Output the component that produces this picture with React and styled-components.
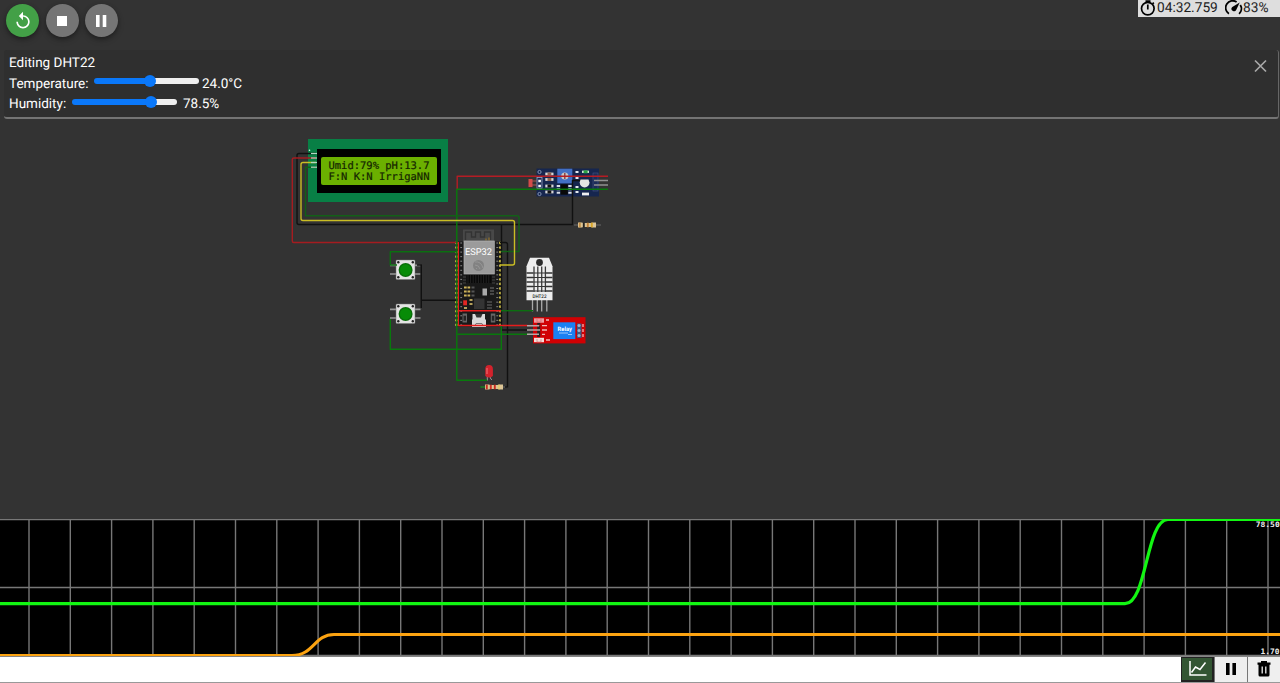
import React from "react";
import styled, { createGlobalStyle } from "styled-components";

const GlobalStyle = createGlobalStyle`
  *, *::before, *::after { box-sizing: border-box; }
  body { margin: 0; background: #333; overflow: hidden; }
  button { font: inherit; padding: 0; cursor: pointer; }
`;

const Page = styled.main`
  position: relative;
  display: flex;
  flex-direction: column;
  width: 100%;
  height: 683px;
  background: #333;
  color: #fff;
  font-family: Roboto, "Liberation Sans", sans-serif;
  text-rendering: geometricPrecision;
  overflow: hidden;
`;

const Toolbar = styled.header`
  display: flex;
  gap: 6.5px;
  height: 50px;
  padding: 4px 0 0 6px;
  flex: none;
`;

const RoundButton = styled.button`
  display: flex;
  align-items: center;
  justify-content: center;
  width: 33px;
  height: 33px;
  border: 0;
  border-radius: 50%;
  color: #fff;
  background: ${(p) => (p.$primary ? "#43a047" : "#757575")};
  box-shadow: 0 2px 4px rgba(0, 0, 0, 0.3), 0 3px 7px rgba(0, 0, 0, 0.15);
`;

const StatusBadge = styled.div`
  position: absolute;
  top: 0;
  right: 0;
  display: flex;
  align-items: center;
  width: 142px;
  height: 17px;
  padding-left: 2px;
  background: #dedede;
  color: #1c1c1c;
  font-size: 13.7px;
  svg { flex: none; }
`;

const StatusText = styled.span`
  width: ${(p) => p.$width}px;
  height: 17px;
  line-height: 16px;
  white-space: nowrap;
`;

const EditPanel = styled.section`
  display: flex;
  justify-content: space-between;
  flex: none;
  height: 69px;
  margin: 0 1px 0 4px;
  padding: 3px 10px 0 5px;
  background: #2f2f2f;
  border-right: 1.5px solid #666;
  border-bottom: 2px solid #747474;
  border-radius: 3px;
  font-size: 13.5px;
`;

const PanelLines = styled.div`
  display: flex;
  flex-direction: column;
`;

const PanelLine = styled.label`
  display: flex;
  align-items: center;
  height: 20.6px;
  white-space: nowrap;
`;

const LabelText = styled.span`
  width: ${(p) => p.$width}px;
`;

const Track = styled.span`
  position: relative;
  width: 105px;
  height: 6px;
  margin: 0 ${(p) => p.$gap}px 5px 0;
  border-radius: 3px;
  background: linear-gradient(to right, #0a78fa ${(p) => p.$fill}px, #efefef ${(p) => p.$fill}px);
  &::after {
    content: "";
    position: absolute;
    top: -3px;
    left: ${(p) => p.$fill - 6}px;
    width: 12px;
    height: 12px;
    border-radius: 50%;
    background: #0a78fa;
  }
`;

const CloseButton = styled.button`
  width: 15px;
  height: 26px;
  border: 0;
  background: none;
  color: #a8a8a8;
  svg { display: block; }
`;

const Board = styled.div`
  position: relative;
  flex: 1;
  min-height: 0;
`;

const PartBox = styled.svg`
  position: absolute;
  left: ${(p) => p.$x}px;
  top: ${(p) => p.$y - 119}px;
`;

const LcdText = styled.text`
  font: 10.4px "DejaVu Sans Mono", "Liberation Mono", monospace;
  fill: #142400;
  stroke: #142400;
  stroke-width: 0.2px;
  white-space: pre;
`;

const ChipText = styled.text`
  font: ${(p) => p.$weight || 500} ${(p) => p.$size}px Roboto, "Liberation Sans", sans-serif;
  fill: ${(p) => p.$fill || "#fff"};
  text-anchor: middle;
`;

const ChartArea = styled.div`
  flex: none;
  height: 137px;
  background: #000;
  svg { display: block; }
`;

const ScaleText = styled.text`
  font: bold 7.4px "DejaVu Sans Mono", "Liberation Mono", monospace;
  fill: #eee;
`;

const SerialBar = styled.footer`
  display: flex;
  flex: none;
  height: 27px;
  background: #fff;
  border-top: 1px solid #858585;
  border-bottom: 1px solid #999;
`;

const SerialInput = styled.input`
  flex: 1;
  min-width: 0;
  border: 0;
  padding: 0 8px;
  outline: 0;
  background: #fff;
`;

const BarButton = styled.button`
  display: flex;
  align-items: center;
  justify-content: center;
  width: 33px;
  padding-bottom: 2px;
  padding-left: ${(p) => (p.$active ? 2 : 0)}px;
  border: 1px solid ${(p) => (p.$active ? "#222" : "#777")};
  border-width: ${(p) => (p.$active ? "1px 2px 2px 1px" : "0 0 0 1.5px")};
  background: ${(p) => (p.$active ? "#335533" : "#efefef")};
  color: ${(p) => (p.$active ? "#fff" : "#000")};
`;

/* Parts are drawn in board coordinates, so the view box starts at the part's own place. */
function Part({ x, y, w, h, children }) {
  return (
    <PartBox $x={x} $y={y} width={w} height={h} viewBox={`${x} ${y} ${w} ${h}`}>
      {children}
    </PartBox>
  );
}

function Lcd() {
  return (
    <Part x={306} y={138} w={144} h={66}>
      <rect x="308" y="139" width="140" height="63" fill="#087f45" />
      <rect x="317" y="149" width="124" height="44" fill="#000" />
      <rect x="321" y="157" width="116" height="28" rx="2" fill="#6bb000" />
      <LcdText x="328.5" y="169.2" textLength="101" lengthAdjust="spacingAndGlyphs">Umid:79% pH:13.7</LcdText>
      <LcdText x="328.5" y="179.6" textLength="101" lengthAdjust="spacingAndGlyphs">F:N K:N IrrigaNN</LcdText>
      <circle cx="309.5" cy="150.3" r=".8" fill="#dfe" />
    </Part>
  );
}

function LcdPins() {
  return (
    <Part x={309} y={151} w={9} h={18}>
      {[153.5, 158, 162.5, 167.2].map((y) => (
        <path key={y} d={`M311 ${y}H317`} stroke="#b5d6c4" strokeWidth="1.2" />
      ))}
    </Part>
  );
}

function PushButton({ y }) {
  return (
    <Part x={389} y={y - 11} w={34} h={22}>
      <path d={`M390 ${y - 4.7}H397M390 ${y + 4}H397M414 ${y - 4.7}H420.5M414 ${y + 4}H420.5`} stroke="#999" strokeWidth="1.7" />
      <rect x="396" y={y - 10} width="19" height="19.5" rx="1" fill="#e4e4e4" stroke="#777" strokeWidth=".5" />
      {[398.3, 412.8].map((x) => [y - 7.7, y + 7.3].map((cy) => (
        <circle key={`${x}-${cy}`} cx={x} cy={cy} r="1.2" fill="#222" />
      )))}
      <circle cx="405.6" cy={y} r="7" fill="#096d09" />
      <circle cx="405.6" cy={y} r="5.7" fill="#078b07" />
    </Part>
  );
}

const ESP_PINS = Array.from({ length: 19 }, (_, i) => 243 + i * 4.55);
const SHIELD_RIBS = Array.from({ length: 9 }, (_, i) => 468 + i * 2.6);

function Esp32() {
  return (
    <Part x={454} y={228} w={50} h={102}>
      <rect x="463" y="229.5" width="31" height="14" fill="#484848" />
      <path d="M465.5 240v-8h6v5h4v-5h5v5h4v-5h6v8" fill="none" stroke="#333" strokeWidth="1.3" />
      <path d="M486 238.5v2M489 237.5v3" stroke="#a17b25" />
      <rect x="456" y="241.5" width="46" height="85" fill="#191919" />
      <rect x="464" y="241" width="30.3" height="33" fill="#9b9b9b" />
      <rect x="464" y="241" width="30.3" height="33" fill="none" stroke="#b2b2b2" strokeWidth=".7" />
      <ChipText x="478.5" y="255" $size={9.4} $weight={400} textLength="27" lengthAdjust="spacingAndGlyphs">ESP32</ChipText>
      <circle cx="478.5" cy="265.5" r="5.5" fill="#828282" />
      <path d="M475 262q6-1 8 6M475 265q4 0 5 4M476 268l1 1" fill="none" stroke="#9b9b9b" strokeWidth=".8" />
      <path d="M463 277h3M463 280h3M463 283h3M492 277h3M492 280h3M492 283h3" stroke="#444" />
      <rect x="466.5" y="275" width="25" height="8" fill="#080808" />
      {SHIELD_RIBS.map((x) => <path key={x} d={`M${x} 275v8`} stroke="#2a2a2a" strokeWidth=".8" />)}
      {ESP_PINS.map((y) => (
        <g key={y} fill="#c3b545">
          <circle cx="456.5" cy={y} r="1.4" /><circle cx="500.3" cy={y} r="1.4" />
          <path d={`M460.3 ${y}h1.8M496.3 ${y}h1.8`} stroke="#888" strokeWidth="1" />
        </g>
      ))}
      {[287.5, 291.5, 295.5].map((y) => (
        <path key={y} d={`M464 ${y}h2.7M467.5 ${y}h2.7`} stroke="#cdb35a" strokeWidth="2" />
      ))}
      <path d="M471.5 287.5h3M471.5 291.5h3M471.5 295.5h3" stroke="#555" strokeWidth="1.8" />
      <rect x="482.5" y="288.5" width="4.5" height="7" fill="#aaa" />
      <path d="M490 288h4M490 291h4M490 294h4" stroke="#777" />
      <rect x="474" y="298.5" width="10.5" height="10.5" fill="#343434" />
      <rect x="463.2" y="300.3" width="3.8" height="5" fill="#e12622" />
      <path d="M464 308h3M469.5 300h3M469.5 304h3" stroke="#b4a05b" strokeWidth="2" />
      <path d="M487 302h5M487 305h5M487 308h5" stroke="#505050" strokeWidth="1.7" />
      <g fill="#666"><rect x="462.5" y="313.5" width="4.5" height="9" /><rect x="490.8" y="313.5" width="4.5" height="9" /></g>
      <g fill="#242424"><rect x="463.5" y="315.7" width="2.5" height="5" /><rect x="491.8" y="315.7" width="2.5" height="5" /></g>
      <path d="M472.5 314h12.5v5l1 1v7h-14v-7l.5-1z" fill="#dadada" />
      <path d="M475 314l1.5 3.5h4.5l1.5-3.5" fill="#333" />
      <path d="M475 326l1-2.5h6l1 2.5" fill="none" stroke="#777" />
    </Part>
  );
}

function LightSensor() {
  return (
    <Part x={526} y={166} w={84} h={32}>
      <path d="M531 181h8M531 185h8" stroke="#a55" />
      <rect x="536.5" y="168.5" width="62.5" height="28" fill="#16264f" />
      <rect x="528.5" y="179" width="4" height="8" fill="#d44b49" />
      <g fill="none" stroke="#9daac7" strokeWidth=".8">
        <circle cx="539.5" cy="172" r="1.6" /><circle cx="539.5" cy="194" r="1.6" />
        <rect x="537" y="177.5" width="5" height="11" />
      </g>
      <path d="M538.3 181h2.6M538.3 186h2.6" stroke="#fff" strokeWidth="2.4" />
      {[174, 179.5, 186, 192].map((y, i) => (
        <g key={y}>
          <path d={`M545.3 ${y}h8.2`} stroke="#d6d6d6" strokeWidth="2.8" />
          <path d={`M547.5 ${y}h3.8`} stroke={i < 2 ? "#8b6250" : "#111"} strokeWidth="3" />
        </g>
      ))}
      <rect x="557.3" y="168.7" width="15" height="14.6" fill="#426fc4" />
      <circle cx="564.8" cy="176" r="3.6" fill="#c8c8c6" />
      <path d="M564.8 173v6" stroke="#8c3434" strokeWidth="1.3" />
      <path d="M556.7 186h3.5M556.7 189.3h3.5M556.7 192.8h3.5M568.3 186h3.5M568.3 189.3h3.5M568.3 192.8h3.5" stroke="#d7dce4" strokeWidth="1.9" />
      <rect x="560.5" y="184.2" width="7.3" height="10.5" fill="#090909" />
      <path d="M575.5 172h3M575.5 178h3M575.5 187h3M575.5 192h3" stroke="#e4e8ee" strokeWidth="2.2" />
      <path d="M582 171.8h7" stroke="#cfe6d4" strokeWidth="2.3" /><path d="M583.6 171.8h4" stroke="#2ba345" strokeWidth="3" />
      <path d="M582 194h7" stroke="#eee" strokeWidth="2.8" />
      <rect x="593" y="173" width="5" height="18" fill="#1b2c58" stroke="#465580" strokeWidth=".6" />
      <path d="M594 180.5h14M594 185h14" stroke="#919191" strokeWidth="1.6" />
    </Part>
  );
}

function SensorDome() {
  return (
    <Part x={579} y={177} w={12} h={12}>
      <path d="M580.5 179.5h8l1 3a4.9 4.9 0 0 1-9.8 0z" fill="#e4e4e4" />
    </Part>
  );
}

function Dht22() {
  return (
    <Part x={525} y={256} w={30} h={57}>
      {[532.5, 537.3, 541.7, 546.8].map((x) => <path key={x} d={`M${x} 299V311.5`} stroke="#aaa" strokeWidth="1.3" />)}
      <path d="M530 257.8h19l3.5 8.5v34H526.5v-34z" fill="#ededed" />
      <circle cx="539.5" cy="262.5" r="3.4" fill="#2b2b2b" />
      <path d="M526.5 273h6.5M526.5 277.5h6.5M526.5 282h6.5M526.5 286.5h6.5M526.5 291h6.5M546 273h6.5M546 277.5h6.5M546 282h6.5M546 286.5h6.5M546 291h6.5" stroke="#333" strokeWidth="1.4" />
      <path d="M534 266.5V292M537.8 266.5V292M541.7 266.5V292M545.4 266.5V292" stroke="#3c3c3c" strokeWidth="1.3" />
      <path d="M533 273h13M533 277.5h13M533 282h13M533 286.5h13M533 291h13" stroke="#333" strokeWidth="1.1" />
      <ChipText x="539.5" y="298.2" $size={4.9} $fill="#222" textLength="14" lengthAdjust="spacingAndGlyphs">DHT22</ChipText>
    </Part>
  );
}

function Relay() {
  return (
    <Part x={525} y={316} w={62} h={29}>
      <rect x="533" y="317.2" width="52.5" height="26.2" fill="#d10003" />
      <rect x="534" y="318.3" width="10" height="4.4" fill="#f09a9f" />
      <rect x="534" y="337.8" width="10" height="4.4" fill="#f5ded9" />
      <path d="M537 319v3h4v-3M537 339v3h4v-3" fill="none" stroke="#c9616a" strokeWidth=".6" />
      <path d="M542 325.7h5M542 330h5M542 334.3h3M546 320h3M546 340h4" stroke="#ebb" strokeWidth="1.3" />
      <path d="M538.7 323V337" stroke="#222" strokeWidth="3" />
      <rect x="553.3" y="322.3" width="22" height="16.8" fill="#1a80f2" />
      <ChipText x="564.8" y="331" $size={6} $weight={700} textLength="14.5" lengthAdjust="spacingAndGlyphs">Relay</ChipText>
      <path d="M559 333h9M568 334.5h4" stroke="#bedcff" strokeWidth=".8" />
      <rect x="577" y="323.5" width="4.5" height="14.5" fill="#3e5a80" />
      {[325.5, 330.5, 335.5].map((y) => (
        <g key={y}><circle cx="579" cy={y} r="1.5" fill="#9db4cd" /><path d={`M583 ${y - 1.5}v3`} stroke="#f3c7c7" strokeWidth="1.2" /></g>
      ))}
    </Part>
  );
}

function RelayPins() {
  return (
    <Part x={525} y={323} w={18} h={14}>
      <path d="M527 325.7h12M527 330h13M527 334.3h12" stroke="#b4a8a8" strokeWidth="1.4" />
    </Part>
  );
}

function Led() {
  return (
    <Part x={483} y={363} w={12} h={19}>
      <path d="M487.3 376v4.5M490.3 376v2l1.5 2" fill="none" stroke="#999" />
      <path d="M485.3 369q0-4 3.8-4t3.8 4v7q-3.8 3-7.6 0z" fill="#d2222c" />
      <path d="M487 368v6" stroke="#ec686d" strokeWidth="1.2" />
    </Part>
  );
}

function Resistor({ x, y, start, bands }) {
  return (
    <Part x={x - 5} y={y - 4} w={30} h={8}>
      <path d={`M${x - 4} ${y}h27`} stroke="#777" strokeWidth=".8" />
      {start && <path d={`M${x - 5} ${y}h5`} stroke={start} strokeWidth="1.3" />}
      <path d={`M${x} ${y - 2.4}h4l1 .4h8l1-.4h4v4.8h-4l-1-.4h-8l-1 .4h-4z`} fill="#dcc596" />
      {bands.map((color, i) => (
        <path key={i} d={`M${x + 1.8 + i * 4} ${y - 2.3}v4.6`} stroke={color} strokeWidth="1.9" />
      ))}
    </Part>
  );
}

const WIRES = [
  ["#111", "M316 153.5H299q-2 0-2 2V222.5q0 2 2 2H572.5V180.5H586"],
  ["#111", "M501.5 225V330H530"],
  ["#111", "M500 242.5H505.5q2 0 2 2V387H505"],
  ["#111", "M417 265H421.3V308M421.3 300.3H457"],
  ["#a51c20", "M316 158H293.8q-1.5 0-1.5 1.5V241q0 1.5 1.5 1.5H458"],
  ["#b51c24", "M457.2 190V176.2H608"],
  ["#e81c1c", "M458.3 242V325.5H527"],
  ["#e81c1c", "M458 310.7H501"],
  ["#b52225", "M527 325.5H540"],
  ["#087a0c", "M608 189.3H456.8V380.3H487"],
  ["#126017", "M316 167.2H305.5V215.8H517q2 0 2 2V251.5H501"],
  ["#cabd24", "M316 162.5H303q-2 0-2 2V218.5q0 2 2 2H512.5q2 0 2 2V263q0 2-2 2H500"],
  ["#0b6f10", "M397 265H390.3V251.7H457"],
  ["#08790c", "M390.3 319V349.3H501.3V326"],
  ["#0b6f10", "M501 310.7H533"],
  ["#08790c", "M457.3 334.3H530"],
];

function Wires() {
  return (
    <Part x={0} y={119} w={640} h={400}>
      {WIRES.map(([color, d]) => (
        <path key={d} d={d} fill="none" stroke={color} strokeWidth="1.4" strokeLinejoin="round" />
      ))}
    </Part>
  );
}

const GRID = Array.from({ length: 31 }, (_, i) => 29 + i * 41.3);

function Plotter() {
  return (
    <ChartArea>
      <svg width="1280" height="137" viewBox="0 0 1280 137">
        <g stroke="#777" strokeWidth="1.4">
          <path d="M0 .5H1280M0 68.5H1280M0 136.5H1280" />
          {GRID.map((x) => <path key={x} d={`M${x} 0V137`} />)}
        </g>
        <path d="M0 136.5H292C314 136.5 314 115.5 334 115.5H1280" fill="none" stroke="#fca311" strokeWidth="3" />
        <path d="M0 84.7H1125C1147 84.7 1146 .5 1168 .5H1280" fill="none" stroke="#12f612" strokeWidth="3.2" />
        <ScaleText x="1255.7" y="8.3" textLength="24" lengthAdjust="spacingAndGlyphs">78.50</ScaleText>
        <ScaleText x="1260.5" y="135" textLength="19" lengthAdjust="spacingAndGlyphs">1.70</ScaleText>
      </svg>
    </ChartArea>
  );
}

function RestartIcon() {
  return (
    <svg width="20" height="20" viewBox="0 0 24 24" fill="currentColor">
      <path d="M12 5V1L7 6l5 5V7c3.31 0 6 2.69 6 6s-2.69 6-6 6-6-2.69-6-6H4c0 4.42 3.58 8 8 8s8-3.58 8-8-3.58-8-8-8z" />
    </svg>
  );
}

function ClockIcon() {
  return (
    <svg width="17" height="17" viewBox="0 0 17 17" fill="none" stroke="#000" strokeWidth="1.7">
      <circle cx="7.8" cy="8.6" r="6.3" />
      <path d="M5.5 1.2h5M7.8 4.5v5M12.6 3.8l1.2-1.2" />
    </svg>
  );
}

function GaugeIcon() {
  return (
    <svg width="18" height="17" viewBox="0 0 18 17" fill="none" stroke="#000" strokeWidth="1.8">
      <path d="M3.9 13.8A7 7 0 0 1 11.6 1.9M15.3 4.9a7 7 0 0 1-1.2 8.9" />
      <path d="M14.7 2.6 11.3 9.8a2.5 2.5 0 1 1-4-2.9z" fill="#000" stroke="none" />
    </svg>
  );
}

export default function App() {
  return (
    <Page>
      <GlobalStyle />
      <Toolbar>
        <RoundButton $primary aria-label="Restart"><RestartIcon /></RoundButton>
        <RoundButton aria-label="Stop">
          <svg width="10" height="10"><rect width="10" height="10" fill="#fff" /></svg>
        </RoundButton>
        <RoundButton aria-label="Pause">
          <svg width="11" height="12"><path d="M0 0h3.6v12H0zM6.7 0h3.6v12H6.7z" fill="#fff" /></svg>
        </RoundButton>
      </Toolbar>
      <StatusBadge>
        <ClockIcon />
        <StatusText $width={68}>04:32.759</StatusText>
        <GaugeIcon />
        <StatusText $width={30}>83%</StatusText>
      </StatusBadge>
      <EditPanel>
        <PanelLines>
          <PanelLine>Editing DHT22</PanelLine>
          <PanelLine>
            <LabelText $width={85}>Temperature:</LabelText>
            <Track $fill={55.5} $gap={3} />
            24.0°C
          </PanelLine>
          <PanelLine>
            <LabelText $width={63}>Humidity:</LabelText>
            <Track $fill={79} $gap={6} />
            78.5%
          </PanelLine>
        </PanelLines>
        <CloseButton aria-label="Close">
          <svg width="15" height="14" viewBox="0 0 15 14"><path d="M2 1.5 13 12.5M13 1.5 2 12.5" stroke="currentColor" strokeWidth="1.7" /></svg>
        </CloseButton>
      </EditPanel>
      <Board>
        <Lcd />
        <LightSensor />
        <Resistor x={577.5} y={225} bands={["#c18c45", "#222", "#c08035", "#d9a524"]} />
        <PushButton y={269.5} />
        <PushButton y={314} />
        <Esp32 />
        <Dht22 />
        <Relay />
        <Led />
        <Resistor x={485} y={387} start="#0b7a10" bands={["#c92b20", "#ce3226", "#c92b20", "#e3c870"]} />
        <Wires />
        <SensorDome />
        <LcdPins />
        <RelayPins />
      </Board>
      <Plotter />
      <SerialBar>
        <SerialInput aria-label="Serial input" />
        <BarButton $active aria-label="Plotter">
          <svg width="18" height="17" viewBox="0 0 18 17" fill="none" stroke="currentColor" strokeWidth="1.5">
            <path d="M1 1v14h16.5M2.5 12.5 6.5 7l4.5 2.5 5.5-7" />
          </svg>
        </BarButton>
        <BarButton aria-label="Pause output">
          <svg width="11" height="12"><path d="M0 0h3.6v12H0zM6.4 0H10v12H6.4z" fill="currentColor" /></svg>
        </BarButton>
        <BarButton aria-label="Clear output">
          <svg width="14" height="16" viewBox="0 0 14 16">
            <path d="M4 0h6v1.5h3.5v2.3H.5V1.5H4zM1.5 3.5h11V14q0 1.5-1.5 1.5H3q-1.5 0-1.5-1.5z" fill="currentColor" />
            <path d="M5.2 5.5v7M8.8 5.5v7" stroke="#efefef" strokeWidth="1.3" />
          </svg>
        </BarButton>
      </SerialBar>
    </Page>
  );
}
